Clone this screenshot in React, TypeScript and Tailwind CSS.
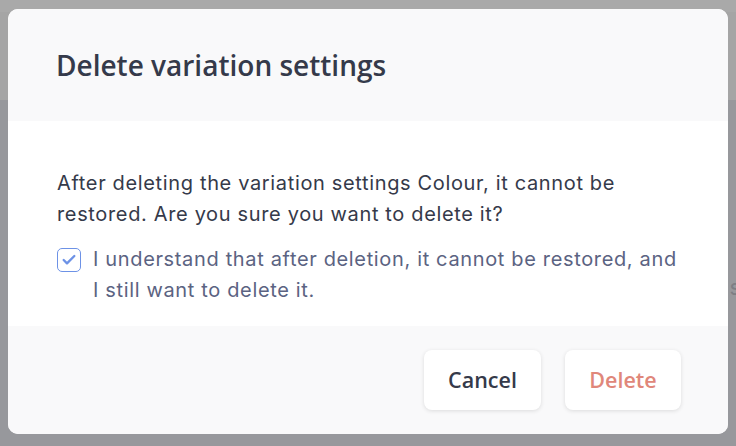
import { Check } from "lucide-react";

export default function App() {
  return (
    <div className="relative w-[736px] h-[446px] overflow-hidden bg-[#97989c]">
      {/* backdrop page (dimmed) */}
      <div className="h-[100px] bg-[#a5a5a5] border-t-[12px] border-[#a9a9a9]" />
      <div className="flex justify-end pt-[176px]">
        <span className="text-[22px] text-[#7d7e84] leading-none mr-[-5px]" style={{ fontFamily: "Inter, sans-serif" }}>
          s
        </span>
      </div>

      {/* modal */}
      <div className="absolute left-[8px] top-[9px] w-[720px] h-[425px] flex flex-col rounded-[10px] overflow-hidden bg-white">
        <div className="h-[112px] shrink-0 bg-[#f9f9fa] flex items-center px-[48px]">
          <h2
            className="text-[28px] font-semibold text-[#353a4a] tracking-[0px]"
            style={{ fontFamily: "'Open Sans', sans-serif" }}
          >
            Delete variation settings
          </h2>
        </div>

        <div
          className="flex-1 bg-white pl-[49px] pr-[30px] pt-[47px]"
          style={{ fontFamily: "Inter, sans-serif" }}
        >
          <p className="text-[20px] leading-[31px] tracking-[0.65px] text-[#353a4a]">
            After deleting the variation settings Colour, it cannot be
            <br />
            restored. Are you sure you want to delete it?
          </p>
          <label className="mt-[14px] flex items-start gap-[12px]">
            <span className="mt-[4px] w-[24px] h-[24px] shrink-0 rounded-[5px] border-[1.5px] border-[#6d92e6] flex items-center justify-center bg-white">
              <Check className="w-[16px] h-[16px] text-[#6d92e6]" strokeWidth={3.5} />
            </span>
            <span className="text-[20px] leading-[31px] tracking-[0.65px] text-[#5b6382]">
              I understand that after deletion, it cannot be restored, and
              <br />
              I still want to delete it.
            </span>
          </label>
        </div>

        <div
          className="h-[108px] shrink-0 bg-[#f9f9fa] flex items-center justify-end gap-[24px] pr-[47px]"
          style={{ fontFamily: "'Open Sans', sans-serif" }}
        >
          <button className="w-[117px] h-[60px] rounded-[8px] bg-white shadow-[0_1px_4px_rgba(0,0,0,0.12)] text-[21.5px] font-semibold text-[#353a4a]">
            Cancel
          </button>
          <button className="w-[116px] h-[60px] rounded-[8px] bg-white shadow-[0_1px_4px_rgba(0,0,0,0.12)] text-[21.5px] font-semibold text-[#e0877a]">
            Delete
          </button>
        </div>
      </div>
    </div>
  );
}
